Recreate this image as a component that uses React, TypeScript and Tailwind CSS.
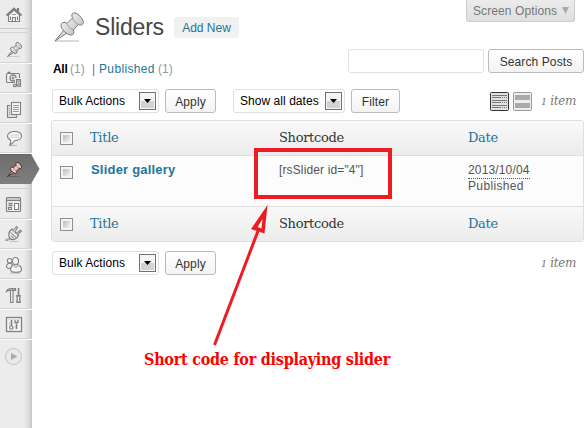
import type { ReactNode } from "react";

const serif = "font-['DejaVu_Serif',serif]";
const serifNarrow = "font-['DejaVu_Serif_Condensed','DejaVu_Serif',serif]";

function Pin({ size, active = false }: { size: number; active?: boolean }) {
  const id = active ? "pin-a" : `pin-${size}`;
  return (
    <svg width={size} height={size} viewBox="0 0 30 30" className="block">
      <defs>
        <linearGradient id={id} x1="0" y1="0" x2="1" y2="1">
          <stop offset="0" stopColor={active ? "#fff4f2" : "#ffffff"} />
          <stop offset="1" stopColor={active ? "#d99f98" : "#b5b5b5"} />
        </linearGradient>
      </defs>
      <path d="M1 29H25" stroke={active ? "#5d3b38" : "#999"} strokeWidth="1.2" opacity=".6" />
      <path d="M10 18L1 29L13 21Z" fill="#ddd" stroke={active ? "#4b2523" : "#777"} strokeWidth={size > 20 ? 1 : 2} />
      <path
        d="M19.500 1C17.500 1.500 17.500 4 18.500 6L13 11.500C10.500 9.500 7 10.500 7 13.500C7 17.500 13.500 23.500 17.500 23C20 22.500 20.300 20 19.300 18L24.500 12.500C27 14 30 12.500 29.300 9.500C28 5 22.500 0 19.500 1Z"
        fill={`url(#${id})`}
        stroke={active ? "#4b2523" : "#777"}
        strokeWidth={size > 20 ? 1 : 2}
      />
      <path d="M18.500 6C19 8.500 22 11.500 24.500 12.500M13 11.500C14 14.500 16.500 17 19.300 18" stroke={active ? "#8c5d58" : "#8a8a8a"} strokeWidth={size > 20 ? 0.8 : 1.3} fill="none" />
    </svg>
  );
}

function Glyph({ children }: { children: ReactNode }) {
  return (
    <svg width="18" height="18" viewBox="0 0 18 18" fill="none" stroke="#808080" strokeWidth="1.1" className="block">
      {children}
    </svg>
  );
}

const House = () => (
  <Glyph>
    <path d="M3.500 9V15.500H14.500V9L9 4Z" fill="#f7f7f7" />
    <path d="M1.500 9.500L9 2.500L16.500 9.500" strokeWidth="1.8" />
    <path d="M12.500 2V5M13.500 2V6" />
    <path d="M7.500 15.500V11.500H10.500V15.500M5.500 10.500V14M12.500 10.500V14" />
    <path d="M7 8.500H11" stroke="#999" />
  </Glyph>
);
const Media = () => (
  <Glyph>
    <rect x="1.500" y="2.500" width="13" height="9" rx="1" fill="#eee" />
    <path d="M2.500 1.500H5.500" strokeWidth="1.600" />
    <circle cx="8" cy="7" r="3" fill="#fff" strokeWidth="1.300" />
    <circle cx="8" cy="7" r="1" />
    <path d="M11.500 14V8.500H15.500V14" stroke="#ebebeb" strokeWidth="3" />
    <path d="M11.500 14.500V8.500H15.500V14M11.500 10H15.500" />
    <ellipse cx="10" cy="14.500" rx="1.600" ry="1.300" fill="#ccc" />
    <ellipse cx="14.200" cy="14.200" rx="1.600" ry="1.300" fill="#ccc" />
  </Glyph>
);
const Pages = () => (
  <Glyph>
    <path d="M5.500 4.500H2.500V16.500H11.500V14.500" fill="#ddd" />
    <rect x="6.500" y="1.500" width="9" height="12" fill="#f7f7f7" />
    <path d="M8 4.500H14M8 6.500H14M8 8.500H14M8 10.500H14" stroke="#999" />
    <path d="M4 7.500H5M4 9.500H5M4 11.500H5M4 13.500H5" stroke="#999" />
  </Glyph>
);
const Comment = () => (
  <Glyph>
    <path d="M4 15.500H12" stroke="#bbb" />
    <path d="M9.500 1.500C13.500 1.500 16.500 3.200 16.500 6C16.500 8.800 13.500 10.500 10 10.500C8.500 12.500 7 14 5 15C5.700 13.500 5.900 12 5.500 10C3.500 9.300 2.500 8 2.500 6C2.500 3.200 5.500 1.500 9.500 1.500Z" fill="#fafafa" />
    <path d="M5 5H14M4.500 7.300H14.500" stroke="#dcdcdc" strokeWidth="1.600" />
  </Glyph>
);
const Appearance = () => (
  <Glyph>
    <rect x="1.500" y="1.500" width="14" height="14" rx="1" fill="#f4f4f4" strokeWidth="1.200" />
    <path d="M2 3H15" stroke="#aaa" />
    <path d="M2 4.500H15" />
    <path d="M3.500 7.500H7.500M3.500 9.500H7.500" strokeWidth="1.300" />
    <rect x="3.500" y="11.500" width="3" height="2" />
    <rect x="9.500" y="7.500" width="4" height="6" fill="#fff" />
  </Glyph>
);
const Plug = () => (
  <Glyph>
    <path d="M1 16C2 13 4 16 5.500 13" strokeWidth="2.200" />
    <path d="M1 16C2 13 4 16 5.500 13" stroke="#ddd" strokeWidth=".8" />
    <path d="M5 13.500C2.500 10.500 4 6 7 4L13.500 10.500C12 14 8 16 5 13.500Z" fill="#eee" strokeWidth="1.300" />
    <path d="M8.200 5.500L11.500 1.500L12.500 2.500L9.700 7M12.300 9.500L16.500 6.200L15.500 5.200L11 8.400" fill="#f8f8f8" />
    <path d="M5.500 7.500L11 12.500M6 11L9 13.500" stroke="#999" />
    <path d="M5 16.500H13" stroke="#c5c5c5" />
  </Glyph>
);
const Users = () => (
  <Glyph>
    <path d="M5 17H15" stroke="#bbb" />
    <circle cx="4.700" cy="4.800" r="2.300" fill="#f8f8f8" />
    <path d="M1.500 11C1.500 8.500 3 7.200 5 7.200C6.400 7.200 7.500 8.500 7.500 10.500C7 13 2.500 13 1.500 11Z" fill="#eee" />
    <ellipse cx="10.500" cy="5" rx="3" ry="3.500" fill="#f8f8f8" />
    <path d="M5.500 13.500C5.500 10.500 8 8.500 11 8.500C14 8.500 16.500 10.800 16.500 13.500C16.500 15.300 14.500 16.300 11 16.300C7.500 16.300 5.500 15.300 5.500 13.500Z" fill="#f4f4f4" />
    <path d="M8.500 9L11 11.500L13.500 9" stroke="#aaa" />
  </Glyph>
);
const Tools = () => (
  <Glyph>
    <path d="M1.500 5.500C2.500 2.500 5 2.300 10.500 2.500V4.500H8V5H6C4.500 4.200 3 4.500 1.500 5.500Z" fill="#aaa" />
    <path d="M5.500 5V16.500H8V5" fill="#f4f4f4" />
    <path d="M13.500 2V9" strokeWidth="1.600" />
    <path d="M11.800 9.500H15.200V11L14.800 12L15.200 16.500H11.800L12.200 12L11.800 11Z" fill="#aaa" />
    <path d="M13.500 11V15" stroke="#eee" />
  </Glyph>
);
const Settings = () => (
  <Glyph>
    <rect x="1.500" y="1.500" width="15" height="14" fill="#f6f6f6" strokeWidth="1.300" />
    <path d="M3 3.500H15" stroke="#ddd" />
    <path d="M6.500 4V10M11.500 7.500V13" strokeWidth="1.600" />
    <circle cx="6.300" cy="11.500" r="1.700" />
    <path d="M10 4V6.500H13V4" strokeWidth="1.300" />
    <path d="M4.500 6V9M9 10V12.500" stroke="#c5c5c5" />
  </Glyph>
);

function SideRow({ children }: { children: ReactNode }) {
  return (
    <div className="h-[30px] w-8 border-b border-[#d5d5d5] pt-[6px] pl-[5px] shadow-[0_1px_0_#f8f8f8]">{children}</div>
  );
}

function Sidebar() {
  return (
    <nav className="flex h-[428px] w-8 shrink-0 flex-col bg-[linear-gradient(90deg,#ececec_0,#ececec_24px,#e2e2e2_27px,#d0d0d0_31px,#bdbdbd_32px)]">
      <div className="h-[29px] border-b border-[#c9c9c9] pt-[6px] pl-[5px]">
        <House />
      </div>
      <div className="h-1 border-b border-[#d5d5d5]" />
      <div className="h-[30px] border-b border-[#d5d5d5] pt-[9px] pl-[7px] shadow-[0_1px_0_#f8f8f8]">
        <Pin size={15} />
      </div>
      <SideRow><div className="pt-[2px]"><Media /></div></SideRow>
      <SideRow><div className="pt-[2px]"><Pages /></div></SideRow>
      <SideRow><div className="pt-px"><Comment /></div></SideRow>
      <div className="relative mt-px h-[30px] w-8">
        <svg width="40" height="30" className="absolute top-0 left-0">
          <defs>
            <linearGradient id="active" x1="0" y1="0" x2="0" y2="1">
              <stop offset="0" stopColor="#6d6d6d" />
              <stop offset="1" stopColor="#7f7f7f" />
            </linearGradient>
          </defs>
          <path d="M0 0H31L39.500 15L31 30H0Z" fill="url(#active)" />
          <path d="M0 .5H31" stroke="#666" />
        </svg>
        <div className="relative pt-[8px] pl-[7px]"><Pin size={15} active /></div>
      </div>
      <div className="h-[5px] border-b border-[#d0d0d0]" />
      <SideRow><div className="pt-px"><Appearance /></div></SideRow>
      <SideRow><Plug /></SideRow>
      <SideRow><div className="pt-px"><Users /></div></SideRow>
      <SideRow><div className="pt-px"><Tools /></div></SideRow>
      <SideRow><div className="pt-px"><Settings /></div></SideRow>
      <svg width="18" height="18" className="mt-[9px] ml-[5px]">
        <circle cx="8.500" cy="8.500" r="8" fill="#e9e9e9" stroke="#c2c2c2" />
        <path d="M6 5L12.500 8.500L6 12Z" fill="#aaa" />
      </svg>
    </nav>
  );
}

function Select({ label, width }: { label: string; width: string }) {
  return (
    <div className={`flex h-6 items-center justify-between rounded-[3px] border border-[#dfdfdf] bg-white pr-[2px] pl-[6px] ${width}`}>
      <span className="pb-px tracking-[0.05px] whitespace-nowrap text-black">{label}</span>
      <span className="flex h-[18px] w-[17px] items-center justify-center border border-[#707070] bg-[linear-gradient(#f5f5f5_50%,#d2d2d2_50%)] shadow-[inset_0_0_0_1px_#f6f6f6]">
        <svg width="7" height="4"><path d="M0 0H7L3.500 4Z" fill="#000" /></svg>
      </span>
    </div>
  );
}

function Button({ label, width }: { label: string; width: string }) {
  return (
    <button className={`flex h-6 items-center justify-center rounded-[3px] border border-[#bbb] bg-linear-to-b from-white to-[#f3f3f3] pt-px tracking-[0.1px] whitespace-nowrap text-[#333] ${width}`}>
      {label}
    </button>
  );
}

function Checkbox() {
  return (
    <span className="block h-[13px] w-[13px] border border-[#8e8f8f] bg-[#f4f4f4] p-[2px]">
      <span className="block h-[7px] w-[7px] bg-linear-to-br from-[#b7bbc2] to-[#f5f5f5]" />
    </span>
  );
}

function ItemCount() {
  return (
    <i className={`text-[12px] tracking-[-0.35px] whitespace-nowrap text-[#777] ${serif}`}>
      <span className="text-[9.500px]">1</span> item
    </i>
  );
}

function HeadRow() {
  return (
    <div className={`grid h-[34px] grid-cols-[30px_189px_189px_1fr] items-center bg-linear-to-b from-[#f9f9f9] to-[#ececec] pl-2 text-[13px] tracking-[-0.3px] text-[#21759b] ${serif}`}>
      <Checkbox />
      <span>Title</span>
      <span className="text-[#333]">Shortcode</span>
      <span>Date</span>
    </div>
  );
}

export default function App() {
  return (
    <div className="relative flex h-[428px] w-[588px] overflow-hidden bg-white font-['Liberation_Sans',Arial,sans-serif] text-[12px] leading-4">
      <Sidebar />
      <main className="flex w-[556px] flex-col pl-[19px]">
        <header className="flex h-[49px] items-start">
          <div className="mt-[12px] ml-[3px]"><Pin size={30} /></div>
          <h1 className="mt-[12px] ml-[11px] w-[79px] text-[23px] leading-[30px] tracking-[-0.2px] text-[#464646]">Sliders</h1>
          <a className="mt-[17px] flex h-[21px] w-[65px] items-center justify-center rounded-[3px] bg-[#f1f1f1] text-[#21759b]">Add New</a>
          <div className="ml-[227px] flex h-[22px] w-[109px] items-center gap-[5px] rounded-b-[3px] border border-t-0 border-[#ccc] bg-linear-to-b from-[#ececec] to-[#dfdfdf] pl-[6px] tracking-[0.1px] whitespace-nowrap text-[#777]">
            Screen Options
            <svg width="7" height="7"><path d="M0 0H7L3.500 7Z" fill="#aaa" /></svg>
          </div>
        </header>
        <div className="flex h-10">
          <div className="mt-[12px] ml-[2px] flex w-[295px] text-[#999]">
            <b className="w-[17px] tracking-[-0.3px] text-black">All</b>
            <span className="w-[22px]">(1)</span>
            <span className="w-[7px] text-[#8a5a8e]">|</span>
            <span className="w-[59px] tracking-[0.35px] text-[#21759b]">Published</span>
            <span>(1)</span>
          </div>
          <input className="h-6 w-[136px] rounded-[3px] border border-[#dfdfdf]" />
          <div className="ml-1"><Button label="Search Posts" width="w-24" /></div>
        </div>
        <div className="flex h-[31px]">
          <div className="ml-px"><Select label="Bulk Actions" width="w-[107px]" /></div>
          <div className="ml-[6px]"><Button label="Apply" width="w-[51px]" /></div>
          <div className="ml-[17px]"><Select label="Show all dates" width="w-[112px]" /></div>
          <div className="ml-[6px]"><Button label="Filter" width="w-[49px]" /></div>
          <svg width="43" height="20" className="mt-[3px] ml-[90px] shrink-0">
            <rect x=".5" y=".5" width="18" height="18" rx="1" fill="#e2e2e2" stroke="#333" />
            <path d="M2 3.500H17M2 8.500H17M2 13.500H17" stroke="#777" />
            <path d="M2 5.500H11M2 10.500H11M2 15.500H11" stroke="#777" />
            <path d="M12 5.500H17M12 10.500H17M12 15.500H17" stroke="#777" strokeDasharray="1 1" />
            <rect x="23.500" y=".5" width="18" height="18" rx="1" fill="#eee" stroke="#999" />
            <path d="M25 5.500H40M25 13.500H40" stroke="#aaa" strokeWidth="5" />
          </svg>
          <div className="mt-1 ml-[8px]"><ItemCount /></div>
        </div>
        <section className="h-[122px] w-[533px] overflow-hidden rounded-[3px] border border-[#dfdfdf]">
          <HeadRow />
          <div className="grid h-[52px] grid-cols-[30px_189px_189px_1fr] border-y border-[#dfdfdf] bg-[#fcfcfc] pt-[6px] pl-2 text-[#555]">
            <div className="pt-[4px]"><Checkbox /></div>
            <b className="pl-px text-[13px] tracking-[0.2px] text-[#21759b]">Slider gallery</b>
            <span className="tracking-[0.13px]">[rsSlider id="4"]</span>
            <span className="pt-px">
              <span className="block w-[62px] border-b border-dotted border-[#555] leading-[15px] tracking-[0.15px]">2013/10/04</span>
              <span className="block leading-[15px] tracking-[0.35px]">Published</span>
            </span>
          </div>
          <HeadRow />
        </section>
        <footer className="mt-[9px] ml-px flex">
          <Select label="Bulk Actions" width="w-[107px]" />
          <div className="ml-[6px]"><Button label="Apply" width="w-[51px]" /></div>
          <div className="mt-1 ml-[325px]"><ItemCount /></div>
        </footer>
        <p className={`mt-[75px] ml-[93px] text-[16px] leading-5 font-bold tracking-[-0.26px] whitespace-nowrap text-[#f00] ${serifNarrow}`}>
          Short code for displaying slider
        </p>
      </main>
      <svg width="588" height="428" className="pointer-events-none absolute inset-0" fill="none" stroke="#ed1c24">
        <rect x="256" y="150" width="134" height="47" strokeWidth="4" />
        <path d="M214.500 345L258 231" strokeWidth="3" />
        <path d="M267.500 205L251 229L264.500 233.500ZM262.500 219L257.500 227L261.500 228.500Z" fill="#ed1c24" fillRule="evenodd" stroke="none" />
      </svg>
    </div>
  );
}
